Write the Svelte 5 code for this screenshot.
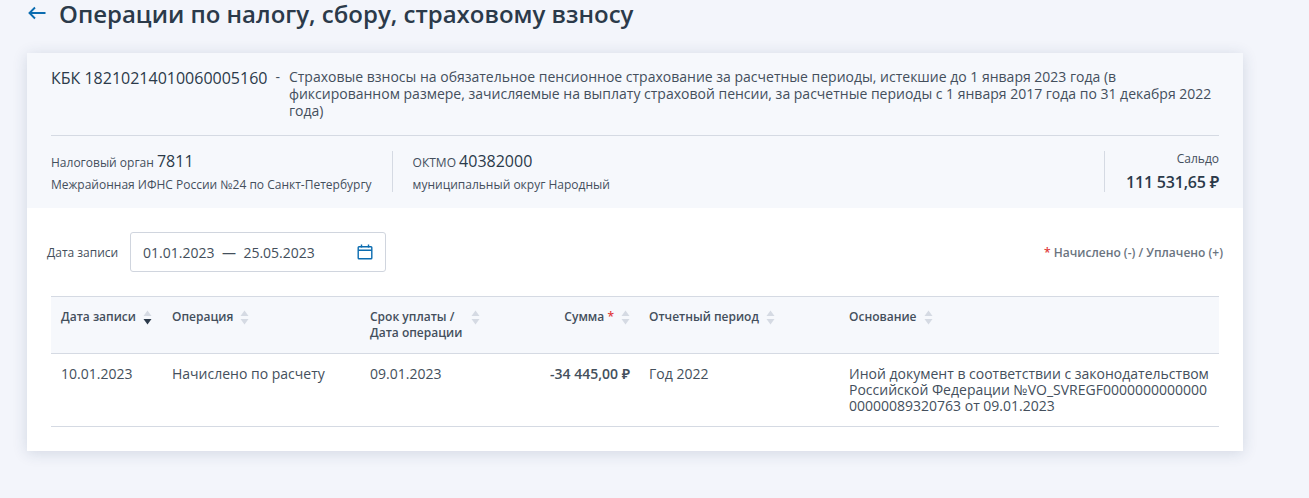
<script lang="ts">
  const columns = [
    { title: 'Дата записи', active: true },
    { title: 'Операция' },
    { title: 'Срок уплаты /', second: 'Дата операции' },
    { title: 'Сумма', mark: true, right: true },
    { title: 'Отчетный период' },
    { title: 'Основание' }
  ];
</script>

<div class="page">
  <header class="top">
    <svg class="back" width="20" height="14" viewBox="0 0 20 14" fill="none" stroke="#0b6cb0" stroke-width="1.9">
      <path d="M18.5 7H2.5M8 1.5L2.5 7L8 12.5" />
    </svg>
    <h1>Операции по налогу, сбору, страховому взносу</h1>
  </header>

  <section class="card">
    <div class="summary">
      <div class="kbk">
        <div class="kbk-code">КБК 18210214010060005160</div>
        <div class="kbk-dash">-</div>
        <div class="kbk-text">Страховые взносы на обязательное пенсионное страхование за расчетные периоды, истекшие до 1 января 2023 года (в фиксированном размере, зачисляемые на выплату страховой пенсии, за расчетные периоды с 1 января 2017 года по 31 декабря 2022 года)</div>
      </div>
      <div class="facts">
        <div class="fact first">
          <div class="fact-main"><span>Налоговый орган</span> <b>7811</b></div>
          <div class="fact-sub">Межрайонная ИФНС России №24 по Санкт-Петербургу</div>
        </div>
        <div class="fact">
          <div class="fact-main"><span>ОКТМО</span> <b>40382000</b></div>
          <div class="fact-sub">муниципальный округ Народный</div>
        </div>
        <div class="saldo">
          <div class="saldo-label">Сальдо</div>
          <div class="saldo-value">111 531,65 ₽</div>
        </div>
      </div>
    </div>

    <div class="filter">
      <span class="filter-label">Дата записи</span>
      <div class="range">
        <span>01.01.2023</span><span class="range-dash">—</span><span>25.05.2023</span>
        <svg class="cal" width="16" height="16" viewBox="0 0 16 16" fill="none" stroke="#0b6cb0" stroke-width="1.4">
          <rect x="1.2" y="2.7" width="13.6" height="12" rx="0.8" />
          <path d="M1.2 6.2H14.8M4.5 0.5V3.5M11.5 0.5V3.5" />
        </svg>
      </div>
      <div class="legend"><i>*</i> Начислено (-) / Уплачено (+)</div>
    </div>

    <div class="table">
      <div class="row head">
        {#each columns as col}
          <div class="th" class:right={col.right}>
            <div class="th-label">
              {col.title}{#if col.mark}&nbsp;<i>*</i>{/if}
              {#if col.second}<br />{col.second}{/if}
            </div>
            <svg class="sort" class:wide={col.second} width="9" height="15" viewBox="0 0 9 15">
              <path d="M4.5 0.5L8.5 6H0.5Z" fill="#d5dae3" />
              <path d="M4.5 14.5L8.5 9H0.5Z" fill={col.active ? '#2b3a4a' : '#d5dae3'} />
            </svg>
          </div>
        {/each}
      </div>
      <div class="row body">
        <div>10.01.2023</div>
        <div>Начислено по расчету</div>
        <div>09.01.2023</div>
        <div class="sum">-34 445,00 ₽</div>
        <div>Год 2022</div>
        <div>Иной документ в соответствии с законодательством<br />Российской Федерации №VO_SVREGF0000000000000<br />00000089320763 от 09.01.2023</div>
      </div>
    </div>
  </section>
</div>

<style>
  :global(body) {
    margin: 0;
    background: #f3f5fb;
  }

  .page {
    height: 498px;
    overflow: hidden;
    padding: 0 66px 0 27px;
    font-family: 'Open Sans', 'Noto Sans', sans-serif;
    color: #444f5c;
  }

  .top {
    height: 53px;
    display: flex;
    align-items: flex-start;
    gap: 12px;
  }

  .back {
    margin-top: 6px;
  }

  h1 {
    margin: 0;
    font-size: 24px;
    line-height: 27px;
    font-weight: 600;
    color: #2b3a4a;
  }

  .card {
    height: 398px;
    background: #fff;
    box-shadow: 0 2px 14px rgba(40, 60, 100, 0.16);
  }

  .summary {
    height: 155px;
    box-sizing: border-box;
    padding: 15px 24px 0;
    background: #f6f8fc;
  }

  .kbk {
    display: flex;
    height: 67px;
    border-bottom: 1px solid #d5dae3;
    font-size: 14px;
    line-height: 17px;
  }

  .kbk-code {
    font-size: 16px;
    font-weight: 500;
    line-height: 20px;
    white-space: nowrap;
    color: #2b3a4a;
  }

  .kbk-dash {
    margin: 0 9px 0 8px;
  }

  .kbk-text {
    flex: 1;
  }

  .facts {
    display: flex;
    margin-top: 15px;
  }

  .fact {
    height: 41px;
    padding-left: 20px;
  }

  .fact.first {
    padding: 0 20px 0 0;
    border-right: 1px solid #d5dae3;
  }

  .fact-main {
    font-size: 12px;
    line-height: 20px;
  }

  .fact-main b {
    font-size: 16px;
    font-weight: 500;
    color: #2b3a4a;
  }

  .fact-sub {
    margin-top: 4px;
    font-size: 12px;
    line-height: 16px;
  }

  .saldo {
    margin-left: auto;
    width: 114px;
    height: 41px;
    border-left: 1px solid #d5dae3;
    text-align: right;
    font-size: 12px;
    line-height: 16px;
  }

  .saldo-value {
    margin-top: 4px;
    font-size: 16px;
    line-height: 22px;
    font-weight: 600;
    letter-spacing: -0.2px;
    color: #2b3a4a;
  }

  .filter {
    display: flex;
    align-items: center;
    margin-top: 24px;
    padding: 0 20px;
    height: 40px;
    font-size: 12px;
  }

  .filter-label {
    width: 83px;
  }

  .range {
    display: flex;
    align-items: center;
    box-sizing: border-box;
    width: 256px;
    height: 40px;
    padding: 0 12px;
    border: 1px solid #d0d5de;
    border-radius: 3px;
    font-size: 14px;
  }

  .range-dash {
    margin: 0 7.5px;
  }

  .cal {
    margin-left: auto;
  }

  .legend {
    margin-left: auto;
    color: #6a7480;
    font-weight: 600;
  }

  i {
    font-style: normal;
    color: #e03a3a;
  }

  .table {
    margin: 24px 24px 0;
    border-bottom: 1px solid #d5dae3;
  }

  .row {
    display: grid;
    grid-template-columns: 111px 198px 130px 149px 200px 380px;
  }

  .head {
    height: 58px;
    box-sizing: border-box;
    background: #f6f8fc;
    border-top: 1px solid #d5dae3;
    border-bottom: 1px solid #d5dae3;
    font-size: 12px;
    line-height: 16px;
    font-weight: 600;
  }

  .th {
    display: flex;
    align-items: flex-start;
    gap: 7px;
    padding: 12px 0 0 10px;
  }

  .th.right {
    justify-content: flex-end;
    padding-right: 9px;
  }

  .sort {
    margin-top: 1px;
    flex: none;
  }

  .sort.wide {
    margin-left: 2px;
  }

  .body {
    height: 72px;
    box-sizing: border-box;
    padding-top: 12px;
    font-size: 14px;
    line-height: 16px;
  }

  .body > div {
    padding-left: 10px;
  }

  .body .sum {
    text-align: right;
    padding-right: 9px;
    font-weight: 600;
  }
</style>
